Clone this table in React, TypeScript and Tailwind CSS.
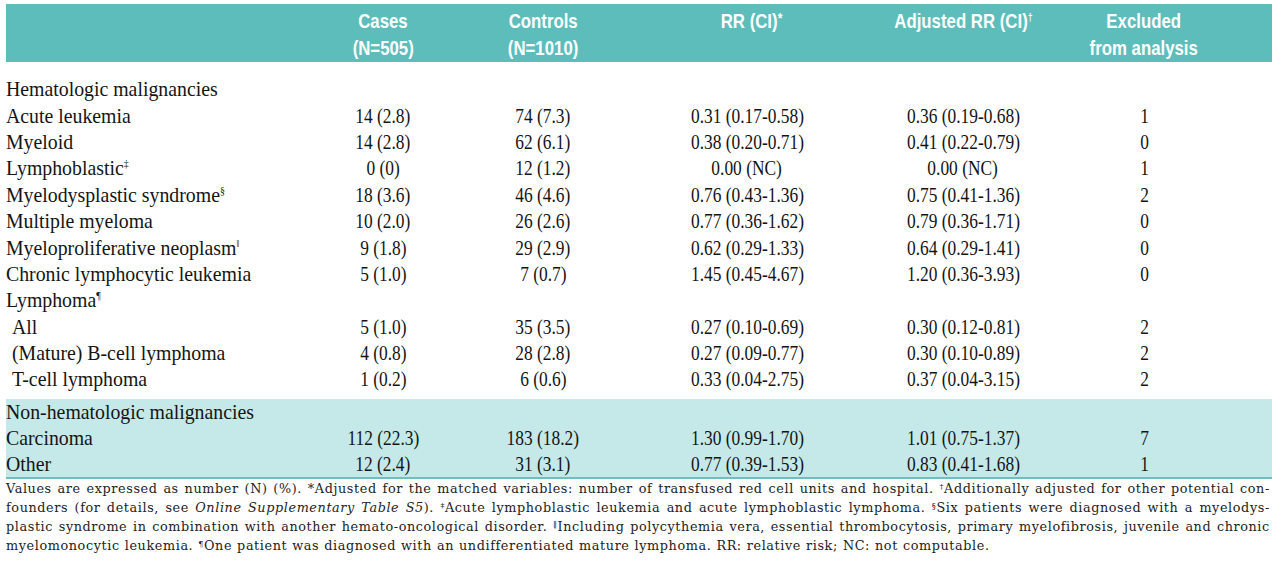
import React from "react";

type Row = { label: string; sup?: string; indent?: boolean; data?: string[] };

const section1: Row[] = [
  { label: "Hematologic malignancies" },
  { label: "Acute leukemia", data: ["14 (2.8)", "74 (7.3)", "0.31 (0.17-0.58)", "0.36 (0.19-0.68)", "1"] },
  { label: "Myeloid", data: ["14 (2.8)", "62 (6.1)", "0.38 (0.20-0.71)", "0.41 (0.22-0.79)", "0"] },
  { label: "Lymphoblastic", sup: "‡", data: ["0 (0)", "12 (1.2)", "0.00 (NC)", "0.00 (NC)", "1"] },
  { label: "Myelodysplastic syndrome", sup: "§", data: ["18 (3.6)", "46 (4.6)", "0.76 (0.43-1.36)", "0.75 (0.41-1.36)", "2"] },
  { label: "Multiple myeloma", data: ["10 (2.0)", "26 (2.6)", "0.77 (0.36-1.62)", "0.79 (0.36-1.71)", "0"] },
  { label: "Myeloproliferative neoplasm", sup: "‖", data: ["9 (1.8)", "29 (2.9)", "0.62 (0.29-1.33)", "0.64 (0.29-1.41)", "0"] },
  { label: "Chronic lymphocytic leukemia", data: ["5 (1.0)", "7 (0.7)", "1.45 (0.45-4.67)", "1.20 (0.36-3.93)", "0"] },
  { label: "Lymphoma", sup: "¶" },
  { label: "All", indent: true, data: ["5 (1.0)", "35 (3.5)", "0.27 (0.10-0.69)", "0.30 (0.12-0.81)", "2"] },
  { label: "(Mature) B-cell lymphoma", indent: true, data: ["4 (0.8)", "28 (2.8)", "0.27 (0.09-0.77)", "0.30 (0.10-0.89)", "2"] },
  { label: "T-cell lymphoma", indent: true, data: ["1 (0.2)", "6 (0.6)", "0.33 (0.04-2.75)", "0.37 (0.04-3.15)", "2"] },
];

const section2: Row[] = [
  { label: "Non-hematologic malignancies" },
  { label: "Carcinoma", data: ["112 (22.3)", "183 (18.2)", "1.30 (0.99-1.70)", "1.01 (0.75-1.37)", "7"] },
  { label: "Other", data: ["12 (2.4)", "31 (3.1)", "0.77 (0.39-1.53)", "0.83 (0.41-1.68)", "1"] },
];

const GRID = "grid grid-cols-[297px_160px_160px_248px_184px_178px_1fr]";

function TableRow({ row, h }: { row: Row; h: string }) {
  return (
    <div className={`${GRID} ${h} items-center`}>
      <div className={`whitespace-nowrap ${row.indent ? "pl-[6px]" : ""}`}>
        <span className="inline-block origin-left scale-x-[0.9]">
          {row.label}
          {row.sup && <span className="relative top-[-8px] text-[11px] leading-none">{row.sup}</span>}
        </span>
      </div>
      {(row.data ?? ["", "", "", "", ""]).map((d, i) => (
        <div key={i} className="text-center whitespace-nowrap">
          <span className="inline-block scale-x-[0.79]">{d}</span>
        </div>
      ))}
      <div />
    </div>
  );
}

function H({ children }: { children: React.ReactNode }) {
  return <span className="inline-block scale-x-[0.8] whitespace-nowrap">{children}</span>;
}

const SYM = "†‡§‖¶";

function Word({ w }: { w: string }) {
  let sym: string | null = null;
  let rest = w;
  if (SYM.includes(rest[0])) {
    sym = rest[0];
    rest = rest.slice(1);
  }
  let italic = false;
  let italicPart = rest;
  let tail = "";
  if (rest.startsWith("_")) {
    italic = true;
    const parts = rest.slice(1).split("|");
    italicPart = parts[0];
    tail = parts[1] ?? "";
  }
  return (
    <span className="whitespace-nowrap">
      {sym && <span className="relative top-[-4px] text-[8px] leading-none">{sym}</span>}
      {italic ? (
        <>
          <span className="italic">{italicPart}</span>
          {tail}
        </>
      ) : (
        rest
      )}
    </span>
  );
}

function JLine({ text }: { text: string }) {
  const words = text.split(" ");
  return (
    <div className="flex justify-between h-[19px] items-center">
      {words.map((w, i) => (
        <Word key={i} w={w} />
      ))}
    </div>
  );
}

export default function App() {
  return (
    <div className="w-[1280px] h-[571px] overflow-hidden bg-white pt-[4px] pl-[6px] pr-[8px] font-['Liberation_Serif','Times_New_Roman',Tinos,Times,serif] text-[#141414]">
      <div className={`${GRID} h-[58px] bg-[#5dbdbb] pt-[3px] text-white font-bold font-['Liberation_Sans',Arial,sans-serif] text-[21px] leading-[27px]`}>
        <div />
        <div className="flex flex-col items-center">
          <H>Cases</H>
          <H>(N=505)</H>
        </div>
        <div className="flex flex-col items-center">
          <H>Controls</H>
          <H>(N=1010)</H>
        </div>
        <div className="flex flex-col items-center pl-[8px]">
          <H>
            RR (CI)<span className="relative top-[-5px] text-[15px] leading-none">*</span>
          </H>
        </div>
        <div className="flex flex-col items-center">
          <H>
            Adjusted RR (CI)<span className="relative top-[-7px] text-[11px] leading-none">†</span>
          </H>
        </div>
        <div className="flex flex-col items-center">
          <H>Excluded</H>
          <H>from analysis</H>
        </div>
        <div />
      </div>

      <div className="mt-[14px] text-[22px] leading-[26px]">
        {section1.map((r, i) => (
          <TableRow key={i} row={r} h="h-[26.4px]" />
        ))}
      </div>

      <div className="mt-[6px] bg-[#c5e9e9] border-b-2 border-[#6cc1c0] text-[22px] leading-[26px]">
        {section2.map((r, i) => (
          <TableRow key={i} row={r} h="h-[26px]" />
        ))}
      </div>

      <div className="pr-[2px] font-['DejaVu_Serif',serif] text-[12.8px] tracking-[0.6px] text-[#222]">
        <JLine text="Values are expressed as number (N) (%). *Adjusted for the matched variables: number of transfused red cell units and hospital. †Additionally adjusted for other potential con-" />
        <JLine text="founders (for details, see _Online _Supplementary _Table _S5|). ‡Acute lymphoblastic leukemia and acute lymphoblastic lymphoma. §Six patients were diagnosed with a myelodys-" />
        <JLine text="plastic syndrome in combination with another hemato-oncological disorder. ‖Including polycythemia vera, essential thrombocytosis, primary myelofibrosis, juvenile and chronic" />
        <div className="flex gap-[5px] h-[19px] items-center">
          {"myelomonocytic leukemia. ¶One patient was diagnosed with an undifferentiated mature lymphoma. RR: relative risk; NC: not computable."
            .split(" ")
            .map((w, i) => (
              <Word key={i} w={w} />
            ))}
        </div>
      </div>
    </div>
  );
}
